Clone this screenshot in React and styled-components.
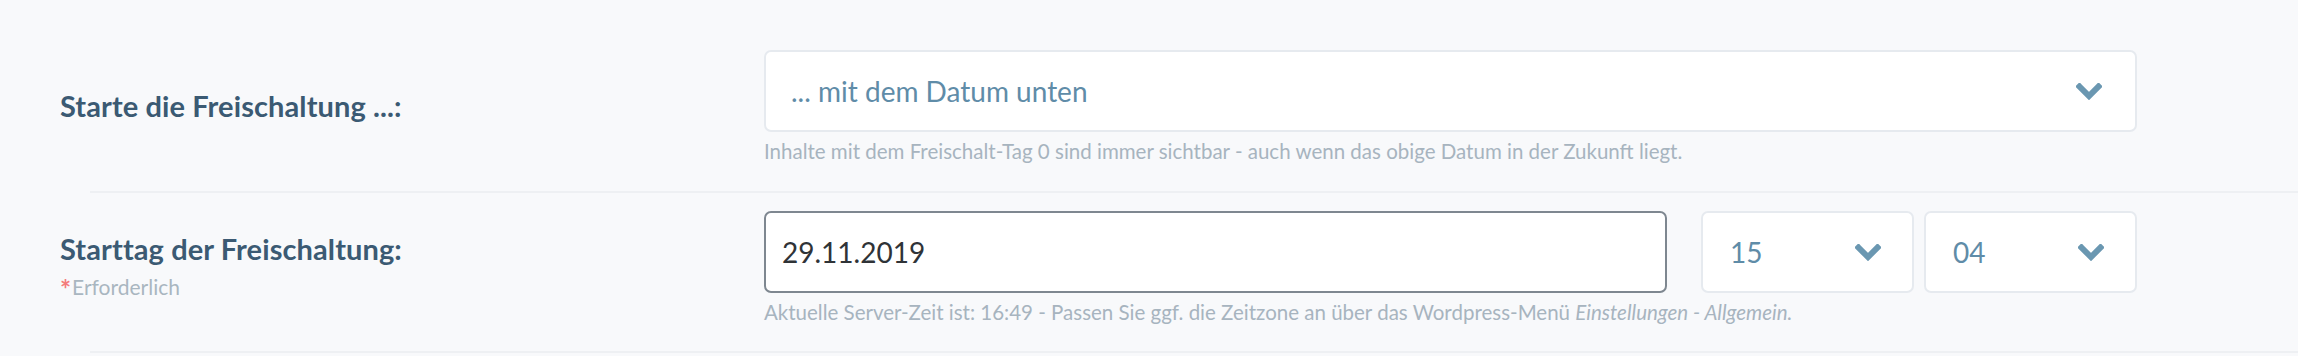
import React from "react";
import styled, { createGlobalStyle } from "styled-components";

const GlobalStyle = createGlobalStyle`
  html, body { margin: 0; padding: 0; }
  body {
    background: #f8f9fb;
    font-family: "Lato", "Open Sans", sans-serif;
  }
`;

const Page = styled.div`
  width: 2298px;
  display: flex;
  flex-direction: column;
`;

const Row = styled.div`
  display: grid;
  grid-template-columns: 704px 1373px;
  align-items: center;
  padding: ${(p) => p.$pad};
  padding-left: 60px;
`;

const Divider = styled.div`
  height: 2px;
  margin-left: 90px;
  background: #eef0f3;
`;

const LabelBlock = styled.div`
  display: flex;
  flex-direction: column;
  gap: 8px;
`;

const Label = styled.div`
  font-size: 29px;
  font-weight: 700;
  color: #3b5a73;
  line-height: 32px;
  letter-spacing: 0.1px;
`;

const Required = styled.div`
  font-size: 21px;
  line-height: 24px;
  color: #a9b6c0;
  display: flex;
  align-items: center;
`;

const Star = styled.span`
  color: #f47c7c;
  font-size: 26px;
  font-weight: 700;
  margin-right: 1px;
  line-height: 24px;
  padding-top: 4px;
`;

const Field = styled.div`
  display: flex;
  flex-direction: column;
`;

const Controls = styled.div`
  display: flex;
  gap: 10px;
`;

const Box = styled.div`
  box-sizing: border-box;
  height: 82px;
  width: ${(p) => p.$w}px;
  margin-left: ${(p) => p.$ml || 0}px;
  background: #fff;
  border: 2px solid ${(p) => (p.$dark ? "#7e8790" : "#e6eaef")};
  border-radius: 7px;
  display: flex;
  align-items: center;
  justify-content: space-between;
  padding: 0 ${(p) => p.$pr}px 0 ${(p) => p.$pl}px;
`;

const Value = styled.span`
  font-size: 28px;
  color: ${(p) => (p.$dark ? "#2f3337" : "#5f8ca8")};
`;

const Help = styled.div`
  margin-top: ${(p) => p.$mt}px;
  font-size: 20.5px;
  line-height: 22px;
  color: #a7b4bf;
  em { font-style: italic; }
`;

const Chevron = () => (
  <svg width="26" height="17" viewBox="0 0 26 17">
    <path
      d="M3.5 3.5 L13 13 L22.5 3.5"
      fill="none"
      stroke="#6a97b1"
      strokeWidth="6"
      strokeLinecap="square"
      strokeLinejoin="miter"
    />
  </svg>
);

export default function App() {
  return (
    <>
      <GlobalStyle />
      <Page>
        <Row $pad="50px 0 29px">
          <Label>Starte die Freischaltung ...:</Label>
          <Field>
            <Box $w={1373} $pl={25} $pr={33}>
              <Value>... mit dem Datum unten</Value>
              <Chevron />
            </Box>
            <Help $mt={8}>
              Inhalte mit dem Freischalt-Tag 0 sind immer sichtbar - auch wenn das obige Datum in der Zukunft liegt.
            </Help>
          </Field>
        </Row>
        <Divider />
        <Row $pad="18px 0 28px">
          <LabelBlock>
            <Label>Starttag der Freischaltung:</Label>
            <Required>
              <Star>*</Star>Erforderlich
            </Required>
          </LabelBlock>
          <Field>
            <Controls>
              <Box $w={903} $dark $pl={16} $pr={16}>
                <Value $dark>29.11.2019</Value>
              </Box>
              <Box $w={213} $ml={24} $pl={27} $pr={31}>
                <Value>15</Value>
                <Chevron />
              </Box>
              <Box $w={213} $pl={27} $pr={31}>
                <Value>04</Value>
                <Chevron />
              </Box>
            </Controls>
            <Help $mt={8}>
              Aktuelle Server-Zeit ist: 16:49 - Passen Sie ggf. die Zeitzone an über das Wordpress-Menü{" "}
              <em>Einstellungen - Allgemein.</em>
            </Help>
          </Field>
        </Row>
        <Divider />
      </Page>
    </>
  );
}
